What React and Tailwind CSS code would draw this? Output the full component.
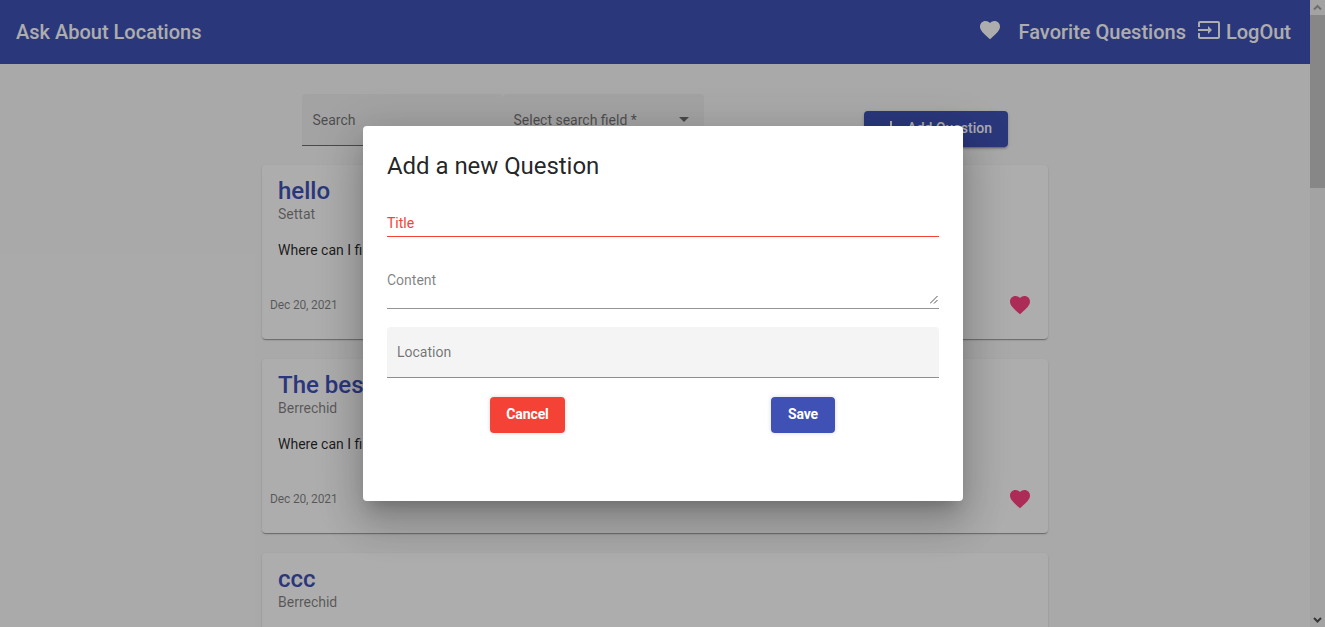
import React from "react";

const questions = [
  { title: "hello", place: "Settat", body: "Where can I find", date: "Dec 20, 2021" },
  { title: "The best", place: "Berrechid", body: "Where can I find", date: "Dec 20, 2021" },
  { title: "ccc", place: "Berrechid" },
];

const HEART =
  "M12 21.35l-1.45-1.32C5.4 15.36 2 12.28 2 8.5 2 5.42 4.42 3 7.5 3c1.74 0 3.41.81 4.5 2.09C13.09 3.81 14.76 3 16.5 3 19.58 3 22 5.42 22 8.5c0 3.78-3.4 6.86-8.55 11.54L12 21.35z";

function Icon({ d, className }) {
  return (
    <svg viewBox="0 0 24 24" className={className} fill="currentColor">
      <path d={d} />
    </svg>
  );
}

function Header() {
  return (
    <header className="flex h-16 items-center bg-[#3f51b5] pl-4 pr-[19px] text-[20px] font-medium leading-8 text-white">
      <span>Ask About Locations</span>
      <span className="flex-1" />
      <Icon d={HEART} className="mb-1 mr-[17px] size-6" />
      <span>Favorite Questions</span>
      <Icon
        d="M21 3.01H3c-1.1 0-2 .9-2 2V9h2V4.99h18v14.03H3V15H1v4.01c0 1.1.9 1.98 2 1.98h18c1.1 0 2-.88 2-1.98v-14c0-1.11-.9-2-2-2zM11 16l4-4-4-4v3H1v2h10v3z"
        className="mb-1 ml-[11px] mr-[5px] size-6"
      />
      <span>LogOut</span>
    </header>
  );
}

function Toolbar() {
  return (
    <div className="flex pl-[302px] pt-[30px] text-[14px] leading-4 text-black/55">
      <div className="h-[52px] w-[201px] rounded-t-[4px] border-b border-black/55 bg-black/[0.04] px-[10.5px] pt-[18px]">Search</div>
      <div className="flex h-[52px] w-[201px] justify-between rounded-t-[4px] border-b border-black/55 bg-black/[0.04] pl-[10.5px] pr-[15px] pt-[18px]">
        <span>Select search field *</span>
        <svg viewBox="0 0 10 5" className="mt-[5px] h-[5px] w-[10px]" fill="currentColor">
          <path d="M0 0h10L5 5z" />
        </svg>
      </div>
      <button className="ml-[160px] mt-[17px] flex h-9 w-36 items-center justify-end rounded-[4px] bg-[#3f51b5] pb-0.5 pr-4 font-medium text-white shadow-[0_3px_1px_-2px_rgba(0,0,0,.2),0_2px_2px_0_rgba(0,0,0,.14),0_1px_5px_0_rgba(0,0,0,.12)]">
        <Icon d="M19 13h-6v6h-2v-6H5v-2h6V5h2v6h6v2z" className="mr-1 size-6" />
        Add Question
      </button>
    </div>
  );
}

function QuestionCard({ q }) {
  return (
    <article className="flex h-[174px] w-[786px] shrink-0 flex-col rounded-[4px] bg-white px-4 pt-[10px] text-[14px] shadow-[0_2px_1px_-1px_rgba(0,0,0,.2),0_1px_1px_0_rgba(0,0,0,.14),0_1px_3px_0_rgba(0,0,0,.12)]">
      <h2 className="text-[24px] font-medium leading-8 text-[#3f51b5]">{q.title}</h2>
      <p className="h-[14px] leading-[14px] text-black/50">{q.place}</p>
      {q.body && <p className="mt-[19px] h-5 leading-5 text-black/85">{q.body}</p>}
      {q.date && (
        <div className="-ml-2 mt-[33px] flex items-center justify-between text-[12px] text-black/50">
          <span className="tracking-[-0.15px]">{q.date}</span>
          <Icon d={HEART} className="size-6 text-[#ff4081]" />
        </div>
      )}
    </article>
  );
}

function Scrollbar() {
  return (
    <div className="flex h-full w-[15px] flex-col items-center bg-[#f1f1f1]">
      <svg viewBox="0 0 15 15" className="size-[15px]" fill="none" stroke="#a3a3a3" strokeWidth="2">
        <path d="M4 9.5l3.5-3.5L11 9.5" />
      </svg>
      <div className="h-[173px] w-full bg-[#c8c8c8]" />
      <div className="flex-1" />
      <svg viewBox="0 0 15 15" className="size-[15px]" fill="none" stroke="#505050" strokeWidth="2">
        <path d="M4 6l3.5 3.5L11 6" />
      </svg>
    </div>
  );
}

function QuestionDialog() {
  return (
    <section className="h-[375px] w-[600px] rounded-[4px] bg-white px-6 pt-6 text-[14px] leading-4 text-black/50 shadow-[0_11px_15px_-7px_rgba(0,0,0,.2),0_24px_38px_3px_rgba(0,0,0,.14),0_9px_46px_8px_rgba(0,0,0,.12)]">
      <h1 className="text-[24px] leading-8 tracking-[-0.05px] text-black/87">Add a new Question</h1>
      <div className="mt-[33px] h-[22px] border-b border-[#f44336] text-[#f44336]">Title</div>
      <div className="mt-[35px] flex h-[37px] items-start justify-between border-b border-black/42">
        <span>Content</span>
        <svg viewBox="0 0 8 8" className="mr-px mt-[24px] size-2" fill="none" stroke="#444" strokeWidth="0.9">
          <path d="M0 7.5L7.5 0M4 7.5L7.5 4" />
        </svg>
      </div>
      <div className="mt-[18px] h-[51px] rounded-t-[4px] border-b border-black/42 bg-[#f4f4f4] px-[10px] pt-[17px] text-black/55">Location</div>
      <div className="flex pl-[103px] pt-[19px] font-bold text-white">
        <button className="h-9 w-[75px] rounded-[4px] bg-[#f44336] pb-0.5 tracking-[-0.1px] shadow-[0_0_4px_0_rgba(0,0,0,.16)]">Cancel</button>
        <button className="ml-[206px] h-9 w-16 rounded-[4px] bg-[#3f51b5] pb-0.5 tracking-[-0.1px] shadow-[0_0_4px_0_rgba(0,0,0,.16)]">Save</button>
      </div>
    </section>
  );
}

export default function App() {
  return (
    <div className="relative flex h-[627px] w-[1325px] overflow-hidden bg-[#fafafa] font-[Roboto,sans-serif]">
      <main className="h-full w-[1310px] overflow-hidden">
        <Header />
        <Toolbar />
        <div className="flex flex-col gap-5 pl-[262px] pt-[18px]">
          {questions.map((q) => (
            <QuestionCard key={q.title} q={q} />
          ))}
        </div>
      </main>
      <Scrollbar />
      <div className="absolute inset-0 flex items-center justify-center bg-black/32 pl-px">
        <QuestionDialog />
      </div>
    </div>
  );
}
